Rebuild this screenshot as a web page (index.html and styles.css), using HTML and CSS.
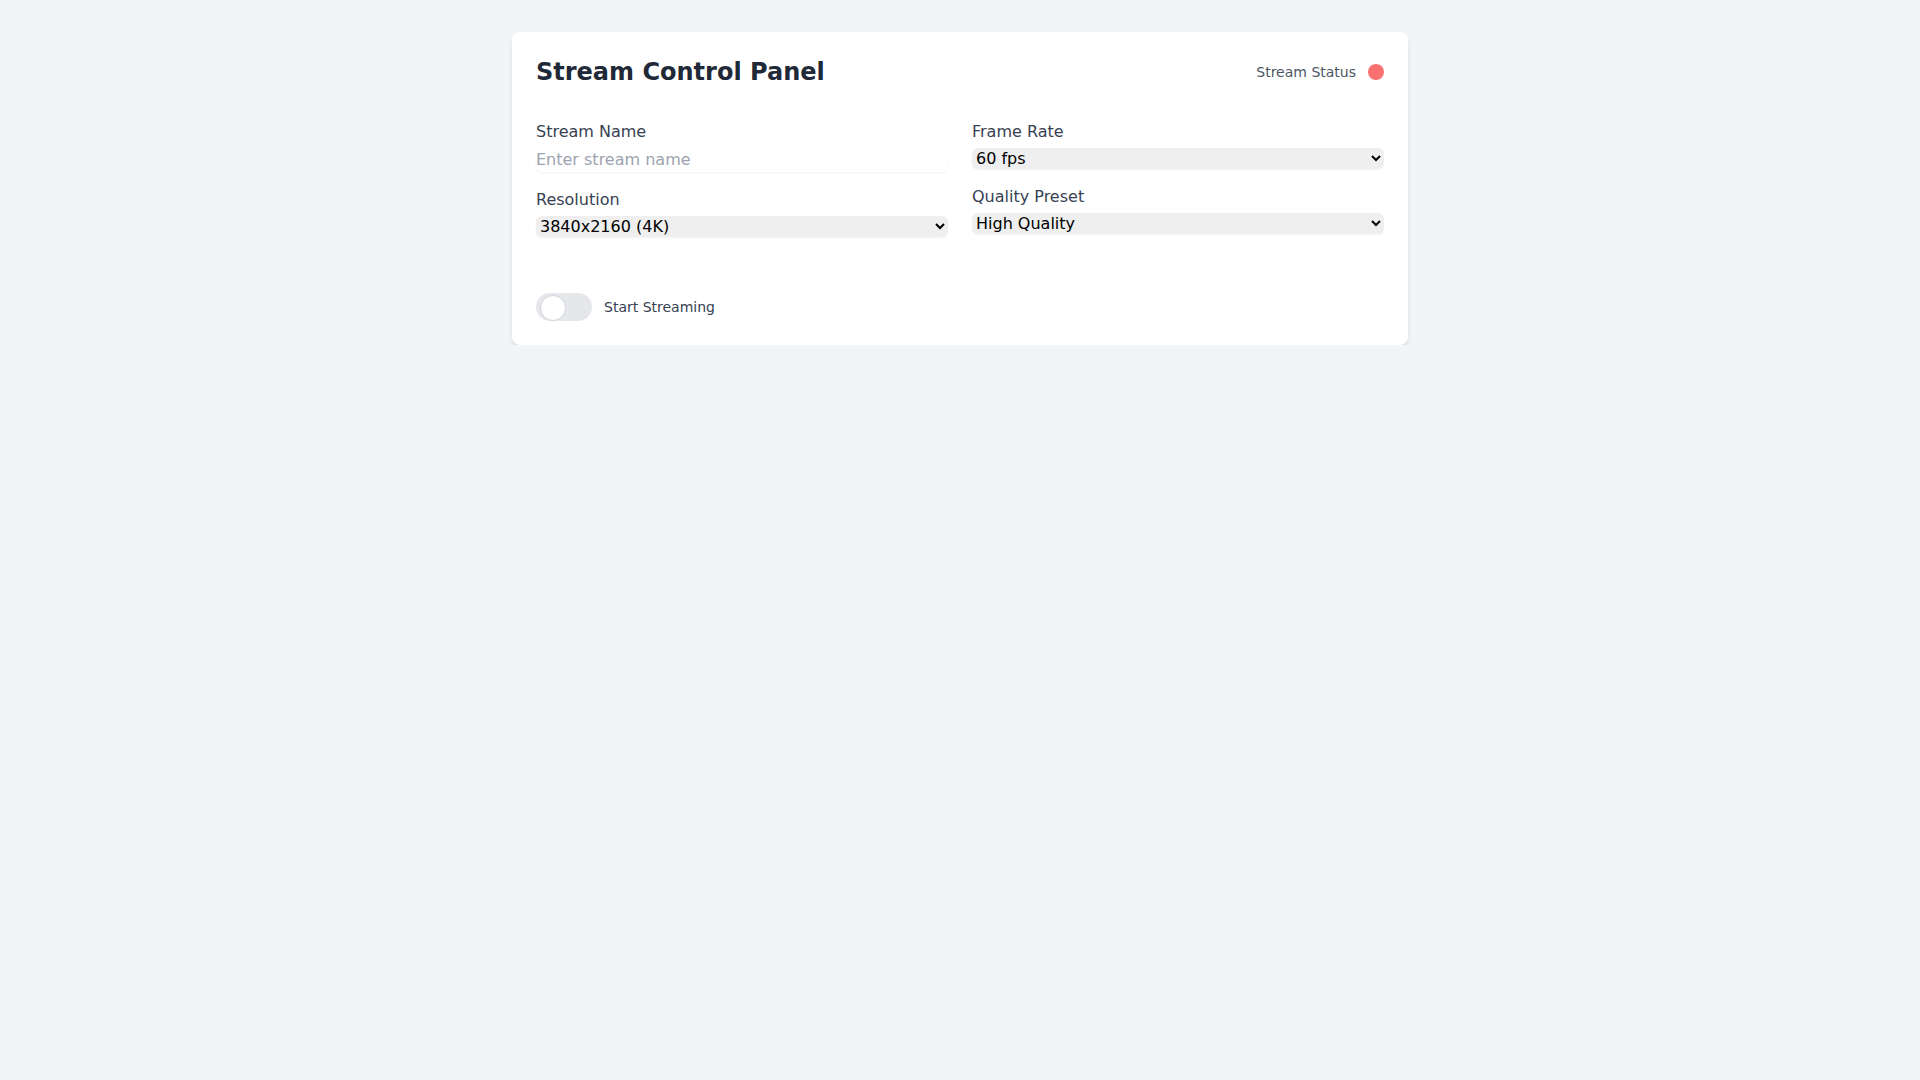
FILE: index.html
```html
<!DOCTYPE html>
<html lang="en">
<head>
  <meta charset="UTF-8" />
  <meta name="viewport" content="width=device-width, initial-scale=1.0"/>
  <title>Stream Control Panel</title>
  <link rel="stylesheet" href="styles.css">
</head>
<body>
  <!-- Control Panel Card -->
  <div class="panel">
    <div class="panel-header">
      <h2>Stream Control Panel</h2>
      <div class="status">
        <span>Stream Status</span>
        <span class="status-dot"></span>
      </div>
    </div>

    <div class="settings">
      <div class="settings-col">
        <div class="field">
          <label for="streamName">Stream Name</label>
          <input type="text" id="streamName" placeholder="Enter stream name">
        </div>
        <div class="field">
          <label for="resolution">Resolution</label>
          <select id="resolution">
            <option>3840x2160 (4K)</option>
            <option>1920x1080 (1080p)</option>
            <option>1280x720 (720p)</option>
          </select>
        </div>
      </div>
      <div class="settings-col">
        <div class="field">
          <label for="frameRate">Frame Rate</label>
          <select id="frameRate">
            <option>60 fps</option>
            <option>30 fps</option>
            <option>24 fps</option>
          </select>
        </div>
        <div class="field">
          <label for="quality">Quality Preset</label>
          <select id="quality">
            <option>High Quality</option>
            <option>Balanced</option>
            <option>Performance</option>
          </select>
        </div>
      </div>
    </div>

    <!-- Streaming toggle -->
    <label class="toggle-row">
      <input type="checkbox" class="toggle-input" id="streamToggle">
      <span class="toggle"></span>
      <span class="toggle-label">Start Streaming</span>
    </label>
  </div>

  <script>
    // Turn the status dot green while streaming
    document.getElementById('streamToggle').addEventListener('change', e => {
      document.querySelector('.status-dot').classList.toggle('live', e.target.checked);
    });
  </script>
</body>
</html>
```

FILE: styles.css
```css
* {
  box-sizing: border-box;
}
body {
  margin: 0;
  font-family: "DejaVu Sans", sans-serif;
  background-color: #f3f4f6;
}
.panel {
  max-width: 896px;
  margin: 32px auto 0;
  background: white;
  border-radius: 8px;
  padding: 24px;
  box-shadow: 0 4px 6px -1px rgba(0, 0, 0, 0.1), 0 2px 4px -2px rgba(0, 0, 0, 0.1);
}
.panel-header {
  display: flex;
  justify-content: space-between;
  align-items: center;
  margin-bottom: 32px;
}
.panel-header h2 {
  margin: 0;
  font-size: 24px;
  line-height: 32px;
  font-weight: bold;
  color: #1f2937;
}
.status {
  display: flex;
  align-items: center;
  gap: 12px;
  font-size: 14px;
  line-height: 20px;
  color: #4b5563;
}
.status-dot {
  width: 16px;
  height: 16px;
  border-radius: 50%;
  background-color: #f87171;
}
.status-dot.live {
  background-color: #4ade80;
}
.settings {
  display: grid;
  grid-template-columns: repeat(2, 1fr);
  gap: 24px;
}
.settings-col {
  display: flex;
  flex-direction: column;
  gap: 16px;
}
.field label {
  display: block;
  font-size: 16px;
  line-height: 24px;
  color: #374151;
}
.field input,
.field select {
  display: block;
  width: 100%;
  margin-top: 4px;
  padding: 0;
  border: 0;
  font: inherit;
  font-size: 16px;
  line-height: 24px;
  border-radius: 6px;
}
.field input {
  background: transparent;
  box-shadow: 0 1px 2px 0 rgba(0, 0, 0, 0.05);
  outline: none;
}
.field input::placeholder {
  color: #9ca3af;
}
.field select {
  background-color: #efefef;
  color: black;
  box-shadow: 0 1px 2px 0 rgba(0, 0, 0, 0.05);
}
.toggle-row {
  display: flex;
  width: fit-content;
  align-items: center;
  margin-top: 56px;
  cursor: pointer;
}
.toggle-input {
  display: none;
}
.toggle {
  position: relative;
  width: 56px;
  height: 28px;
  border-radius: 14px;
  background-color: #e5e7eb;
  transition: background-color 0.2s;
}
.toggle::after {
  content: "";
  position: absolute;
  top: 2px;
  left: 4px;
  width: 24px;
  height: 24px;
  border-radius: 50%;
  background: white;
  border: 1px solid #d1d5db;
  transition: transform 0.2s;
}
.toggle-input:checked + .toggle {
  background-color: #2563eb;
}
.toggle-input:checked + .toggle::after {
  transform: translateX(24px);
  border-color: white;
}
.toggle-label {
  margin-left: 12px;
  font-size: 14px;
  line-height: 20px;
  color: #374151;
}
```
